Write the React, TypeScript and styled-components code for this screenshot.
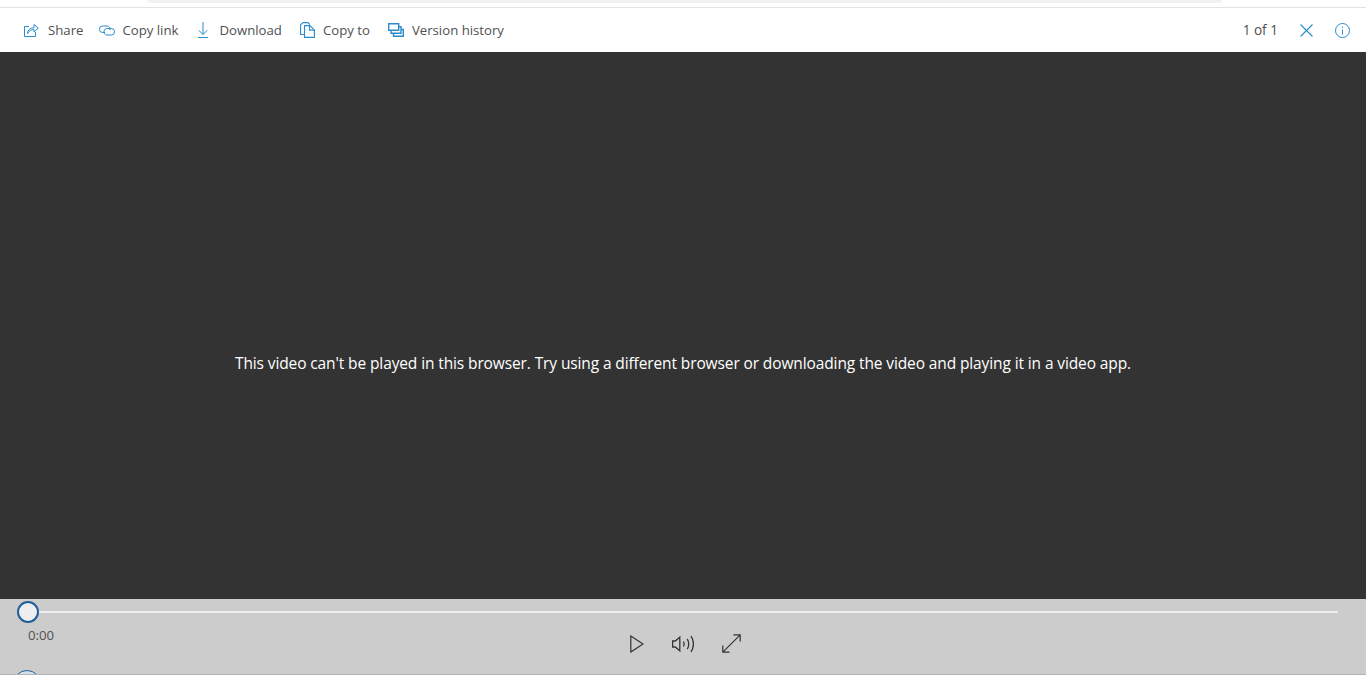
import React from "react";
import styled, { createGlobalStyle } from "styled-components";

const GlobalStyle = createGlobalStyle`
  html, body {
    margin: 0;
    padding: 0;
    height: 100%;
    overflow: hidden;
    background: #fff;
  }
  body {
    font-family: "Open Sans", "Noto Sans", "Liberation Sans", sans-serif;
  }
`;

const Page = styled.div`
  width: 1366px;
  height: 675px;
  display: flex;
  flex-direction: column;
  overflow: hidden;
`;

const TopStrip = styled.div`
  height: 7px;
  padding: 0 144px 0 147px;
  border-bottom: 1px solid #e3e3e3;
  flex: none;
`;

const SearchEdge = styled.div`
  height: 3px;
  background: #f1f2f3;
  border-radius: 0 0 10px 10px;
`;

const Toolbar = styled.div`
  height: 44px;
  flex: none;
  display: flex;
  align-items: center;
  padding: 0 16px 0 24px;
  background: #fff;
`;

const Command = styled.div<{ $gap: number; $after: number }>`
  display: flex;
  align-items: center;
  gap: ${(p) => p.$gap}px;
  margin-right: ${(p) => p.$after}px;
  font-size: 13.2px;
  color: #505050;
  white-space: nowrap;
`;

const Spacer = styled.div`
  flex: 1;
`;

const PageCount = styled.span`
  font-size: 13.6px;
  color: #505050;
  margin-right: 22px;
  padding-bottom: 2px;
`;

const IconButton = styled.div<{ $after?: number }>`
  display: flex;
  margin-right: ${(p) => p.$after ?? 0}px;
`;

const Viewer = styled.div`
  flex: 1;
  background: #333333;
  display: flex;
  align-items: center;
  justify-content: center;
  padding-top: 74px;
`;

const Message = styled.p`
  margin: 0;
  font-size: 15.5px;
  letter-spacing: -0.115px;
  color: #fff;
  white-space: nowrap;
`;

const Controls = styled.div`
  height: 76px;
  flex: none;
  background: #cccccc;
  border-bottom: 1px solid #b4b4b4;
  box-sizing: border-box;
  position: relative;
  overflow: hidden;
`;

const Track = styled.div`
  position: relative;
  height: 2px;
  margin: 12px 28px 0 28px;
  background: #eeeeee;
`;

const SeekThumb = styled.div`
  position: absolute;
  left: -11px;
  top: -10px;
  width: 22px;
  height: 22px;
  box-sizing: border-box;
  border: 2px solid #1f5f99;
  border-radius: 50%;
  background: #eeeeee;
`;

const ClippedThumb = styled.div`
  position: absolute;
  left: 13px;
  top: 71px;
  width: 28px;
  height: 28px;
  box-sizing: border-box;
  border: 1.5px solid #1f5f99;
  border-radius: 50%;
  background: #d5e1ea;
`;

const TimeLabel = styled.div`
  margin: 14px 0 0 28px;
  font-size: 13.2px;
  line-height: 16px;
  color: #505050;
`;

const Transport = styled.div`
  display: flex;
  justify-content: center;
  align-items: center;
  gap: 28px;
  margin-top: -9px;
  padding-left: 4px;
`;

const Blue = "#2b8ccb";

const ShareIcon = () => (
  <svg width="15" height="14" viewBox="0 0 15 14" fill="none" stroke={Blue} strokeWidth="1">
    <path d="M5 3.500H.5v10h11V9" />
    <path d="M3.500 10.500c.2-3.500 2.700-5.800 6.500-5.800V1.500l4.300 3.700L10 9V6.500c-2.800 0-5 1.300-6.500 4z" />
  </svg>
);

const LinkIcon = () => (
  <svg width="16" height="11" viewBox="0 0 16 11" fill="none" stroke={Blue} strokeWidth="1">
    <path d="M6 7.500H3.700a3.200 3.200 0 0 1 0-6.500h4.600A3.200 3.200 0 0 1 11 5" />
    <path d="M5 6a3.200 3.200 0 0 1 2.700-2.500h4.600a3.200 3.200 0 0 1 0 6.500H7.700A3.200 3.200 0 0 1 5 6z" />
  </svg>
);

const DownloadIcon = () => (
  <svg width="10" height="16" viewBox="0 0 10 16" fill="none" stroke={Blue} strokeWidth="1">
    <path d="M5 0v12.500M.8 8.300 5 12.500l4.200-4.200M0 15.500h10" />
  </svg>
);

const CopyIcon = () => (
  <svg width="15" height="16" viewBox="0 0 15 16" fill="none" stroke={Blue} strokeWidth="1.100">
    <path d="M4.500 12.500H.6V2.800L3 .6h5l2 2" />
    <path d="M4.500 15.400V3.600h5.300l4.600 4.300v7.500z" />
    <path d="M9.500 3.600v4.500h4.900" />
  </svg>
);

const HistoryIcon = () => (
  <svg width="16" height="14" viewBox="0 0 16 14" fill="none" stroke={Blue} strokeWidth="1.400">
    <path d="M.7.700h10v6.600H.7z" />
    <path d="M3 7.300v3h10V3.700h-2.300" />
    <path d="M5.500 10.300v3h9.800V6.500H13" />
  </svg>
);

const CloseIcon = () => (
  <svg width="13" height="13" viewBox="0 0 13 13" fill="none" stroke={Blue} strokeWidth="1.100">
    <path d="M.5.500l12 12M12.500.5l-12 12" />
  </svg>
);

const InfoIcon = () => (
  <svg width="15" height="15" viewBox="0 0 15 15" fill="none" stroke={Blue} strokeWidth="1">
    <circle cx="7.500" cy="7.500" r="7" />
    <path d="M7.500 6.500v5" />
    <circle cx="7.500" cy="4.300" r=".7" fill={Blue} stroke="none" />
  </svg>
);

const PlayIcon = () => (
  <svg width="14" height="18" viewBox="0 0 14 18" fill="none" stroke="#333" strokeWidth="1.200">
    <path d="M.8.900 13 9 .8 17.100z" />
  </svg>
);

const VolumeIcon = () => (
  <svg width="22" height="18" viewBox="0 0 22 18" fill="none" stroke="#333" strokeWidth="1.300">
    <path d="M.6 6h2.700l4.500-3.800v13.600L3.300 12H.6z" />
    <path d="M11.500 6.500c.9 1.500.9 3.500 0 5" />
    <path d="M15.200 3.800c1.900 3.200 1.900 7.200 0 10.400" />
    <path d="M19 1c3 4.900 3 11.100 0 16" />
  </svg>
);

const ExpandIcon = () => (
  <svg width="19" height="19" viewBox="0 0 19 19" fill="none" stroke="#333" strokeWidth="1.200">
    <path d="M.8 18.200 18.200.8M11.500.8h6.700v6.700M.8 11.500v6.700h6.700" />
  </svg>
);

const commands = [
  { label: "Share", icon: <ShareIcon />, gap: 9, after: 16 },
  { label: "Copy link", icon: <LinkIcon />, gap: 7, after: 20 },
  { label: "Download", icon: <DownloadIcon />, gap: 11, after: 18 },
  { label: "Copy to", icon: <CopyIcon />, gap: 8, after: 18 },
  { label: "Version history", icon: <HistoryIcon />, gap: 8, after: 0 },
];

export default function App() {
  return (
    <Page>
      <GlobalStyle />
      <TopStrip>
        <SearchEdge />
      </TopStrip>
      <Toolbar>
        {commands.map((c) => (
          <Command key={c.label} $gap={c.gap} $after={c.after}>
            {c.icon}
            {c.label}
          </Command>
        ))}
        <Spacer />
        <PageCount>1 of 1</PageCount>
        <IconButton $after={22}>
          <CloseIcon />
        </IconButton>
        <IconButton>
          <InfoIcon />
        </IconButton>
      </Toolbar>
      <Viewer>
        <Message>
          This video can't be played in this browser. Try using a different browser or downloading the video and playing
          it in a video app.
        </Message>
      </Viewer>
      <Controls>
        <Track>
          <SeekThumb />
        </Track>
        <TimeLabel>0:00</TimeLabel>
        <Transport>
          <IconButton>
            <PlayIcon />
          </IconButton>
          <IconButton>
            <VolumeIcon />
          </IconButton>
          <IconButton>
            <ExpandIcon />
          </IconButton>
        </Transport>
        <ClippedThumb />
      </Controls>
    </Page>
  );
}
